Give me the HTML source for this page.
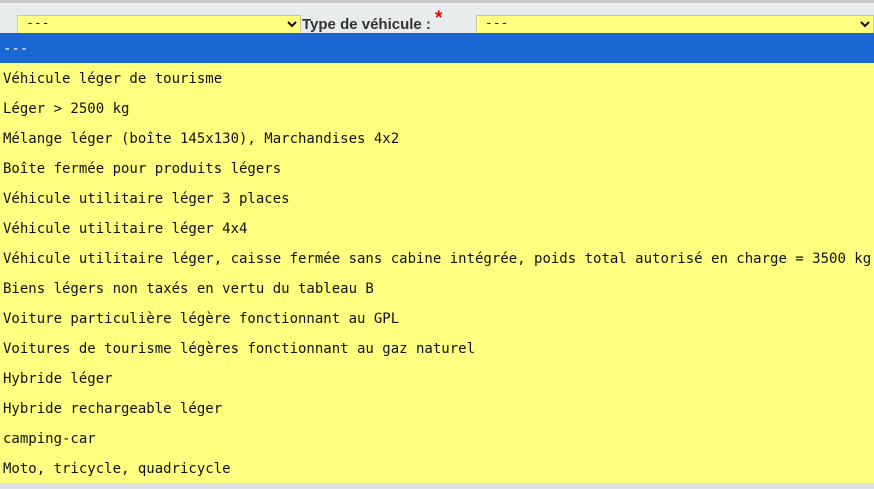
<!DOCTYPE html>
<html><head><meta charset="utf-8"><style>
*{margin:0;padding:0;box-sizing:border-box}
body{width:874px;height:489px;overflow:hidden;background:#e0e1e2;position:relative;font-family:"Liberation Sans",sans-serif}
.top{position:absolute;left:0;top:0;width:874px;height:3px;background:#c8c8c8}
.band{position:absolute;left:0;top:3px;width:874px;height:30px;background:#e9eced}
.sel{position:absolute;top:15px;height:18px;background:#ffff80;border:1px solid #c9c9a0;border-bottom:none;font-family:"DejaVu Sans Mono",monospace;font-size:13px;line-height:16px;padding-left:8px;color:#222}
.sel svg{position:absolute;right:2px;top:3px}
.lbl{position:absolute;left:302px;top:13px;font-weight:bold;font-size:15px;color:#333}
.lbl span{color:#e00;font-size:19px;position:relative;top:-5px;margin-left:4px}
.list{position:absolute;left:0;top:33px;width:874px;height:450px;background:#ffff80;font-family:"DejaVu Sans Mono",monospace;font-size:14px;color:#111}
.list div{height:30px;line-height:32px;padding-left:3px;white-space:nowrap;overflow:hidden}
.list .a{background:#1b67d1;color:#fff}
</style></head><body>
<div class="top"></div><div class="band"></div>
<div class="sel" style="left:17px;width:284px">---<svg width="12" height="10" viewBox="0 0 12 10"><path d="M2 3l4 4 4-4" stroke="#111" stroke-width="2" fill="none"/></svg></div>
<div class="lbl">Type de véhicule :<span>*</span></div>
<div class="sel" style="left:476px;width:398px">---<svg width="12" height="10" viewBox="0 0 12 10"><path d="M2 3l4 4 4-4" stroke="#111" stroke-width="2" fill="none"/></svg></div>
<div class="list">
<div class="a">---</div>
<div>Véhicule léger de tourisme</div>
<div>Léger &gt; 2500 kg</div>
<div>Mélange léger (boîte 145x130), Marchandises 4x2</div>
<div>Boîte fermée pour produits légers</div>
<div>Véhicule utilitaire léger 3 places</div>
<div>Véhicule utilitaire léger 4x4</div>
<div>Véhicule utilitaire léger, caisse fermée sans cabine intégrée, poids total autorisé en charge = 3500 kg</div>
<div>Biens légers non taxés en vertu du tableau B</div>
<div>Voiture particulière légère fonctionnant au GPL</div>
<div>Voitures de tourisme légères fonctionnant au gaz naturel</div>
<div>Hybride léger</div>
<div>Hybride rechargeable léger</div>
<div>camping-car</div>
<div>Moto, tricycle, quadricycle</div>
</div>
</body></html>
